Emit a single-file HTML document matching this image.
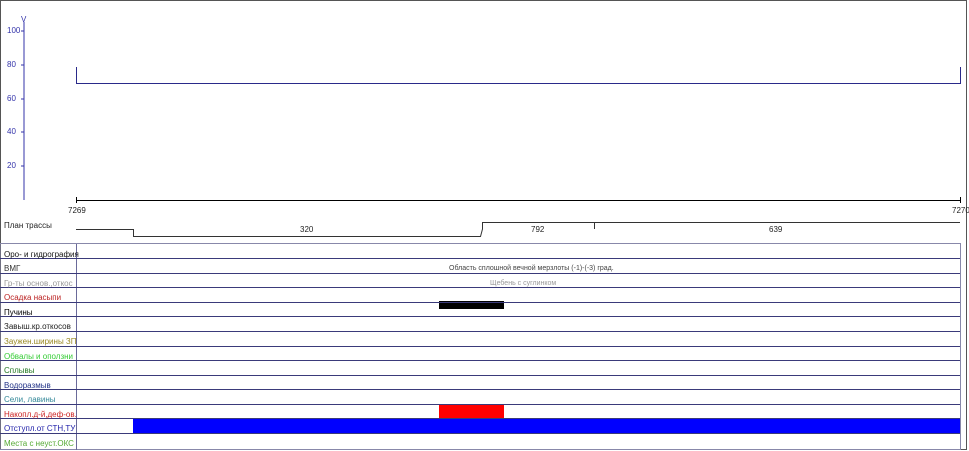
<!DOCTYPE html><html><head><style>body{margin:0;width:969px;height:451px;overflow:hidden;background:#fff}svg{display:block}</style></head><body>
<svg width="969" height="451" xmlns="http://www.w3.org/2000/svg" font-family="Liberation Sans, DejaVu Sans, sans-serif">
<rect x="0.5" y="0.5" width="966" height="449" fill="#fff" stroke="#555"/>
<g stroke="#3333aa" fill="none">
<line x1="24" y1="22" x2="24" y2="200"/>
<line x1="21" y1="31" x2="24" y2="31"/><line x1="21" y1="65" x2="24" y2="65"/><line x1="21" y1="99" x2="24" y2="99"/><line x1="21" y1="132" x2="24" y2="132"/><line x1="21" y1="166" x2="24" y2="166"/>
<polyline points="76.5,67 76.5,83.5 960.5,83.5 960.5,67" stroke="#2a2a8a"/>
</g>
<g fill="#3333aa" font-size="8">
<text x="21" y="22">V</text>
<text x="7" y="33">100</text><text x="7" y="67">80</text><text x="7" y="101">60</text><text x="7" y="134">40</text><text x="7" y="168">20</text>
</g>
<g stroke="#000" fill="none">
<line x1="76" y1="200.5" x2="960" y2="200.5"/>
<line x1="76.5" y1="197" x2="76.5" y2="203"/><line x1="960.5" y1="197" x2="960.5" y2="203"/>
<polyline points="76,229.5 133.5,229.5 133.5,236.5 480.5,236.5 482.5,229 482.5,222.5 960,222.5" stroke="#333"/>
<line x1="594.5" y1="222" x2="594.5" y2="229" stroke="#333"/>
</g>
<g font-size="8" fill="#222">
<text x="68" y="213">7269</text><text x="952" y="213">7270</text>
<text x="4" y="228">План трассы</text>
<text x="300" y="232">320</text><text x="531" y="232">792</text><text x="769" y="232">639</text>
</g>
<rect x="439" y="301" width="65" height="8" fill="#000"/>
<rect x="439" y="404" width="65" height="15" fill="#f00"/>
<rect x="133" y="419" width="827" height="15" fill="#00f"/>
<g stroke="#3a3a7a" fill="none">
<rect x="0" y="243.5" width="960.5" height="206" stroke="#8888aa"/>
<line x1="76.5" y1="244" x2="76.5" y2="450" stroke="#6a6a9a"/>
<line x1="0" y1="258.5" x2="960" y2="258.5"/>
<line x1="0" y1="273.5" x2="960" y2="273.5"/>
<line x1="0" y1="287.5" x2="960" y2="287.5"/>
<line x1="0" y1="302.5" x2="960" y2="302.5"/>
<line x1="0" y1="316.5" x2="960" y2="316.5"/>
<line x1="0" y1="331.5" x2="960" y2="331.5"/>
<line x1="0" y1="346.5" x2="960" y2="346.5"/>
<line x1="0" y1="360.5" x2="960" y2="360.5"/>
<line x1="0" y1="375.5" x2="960" y2="375.5"/>
<line x1="0" y1="389.5" x2="960" y2="389.5"/>
<line x1="0" y1="404.5" x2="960" y2="404.5"/>
<line x1="0" y1="418.5" x2="960" y2="418.5"/>
<line x1="0" y1="433.5" x2="960" y2="433.5"/>
</g>
<g font-size="8">
<text x="4" y="257" fill="#111">Оро- и гидрография</text>
<text x="4" y="271" fill="#333">ВМГ</text>
<text x="4" y="286" fill="#999">Гр-ты основ.,откос</text>
<text x="4" y="300" fill="#b22">Осадка насыпи</text>
<text x="4" y="315" fill="#000">Пучины</text>
<text x="4" y="329" fill="#222">Завыш.кр.откосов</text>
<text x="4" y="344" fill="#998822">Заужен.ширины ЗП</text>
<text x="4" y="359" fill="#33cc33">Обвалы и оползни</text>
<text x="4" y="373" fill="#227722">Сплывы</text>
<text x="4" y="388" fill="#223388">Водоразмыв</text>
<text x="4" y="402" fill="#338899">Сели, лавины</text>
<text x="4" y="417" fill="#cc2222">Накопл.д-й,деф-ов.</text>
<text x="4" y="431" fill="#2222aa">Отступл.от СТН,ТУ</text>
<text x="4" y="446" fill="#55aa33">Места с неуст.ОКС</text>
<text x="449" y="270" font-size="7" fill="#444">Область сплошной вечной мерзлоты (-1)-(-3) град.</text>
<text x="490" y="285" font-size="7" fill="#999">Щебень с суглинком</text>
</g>
</svg></body></html>
